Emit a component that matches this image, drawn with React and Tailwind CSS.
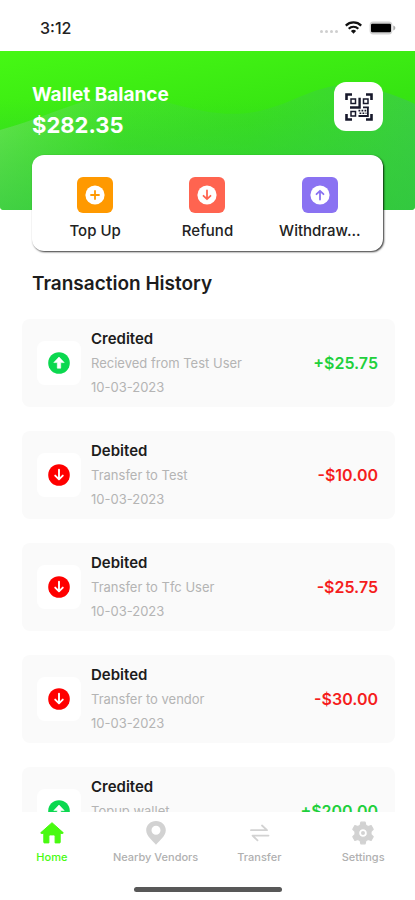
import React from 'react';
import clsx from 'clsx';

const actions = [
  { label: 'Top Up', icon: 'plus', bg: 'bg-[#ff9900]', fg: 'text-[#ff9900]' },
  { label: 'Refund', icon: 'down', bg: 'bg-[#ff6450]', fg: 'text-[#ff6450]' },
  { label: 'Withdraw...', icon: 'up', bg: 'bg-[#8a72f2]', fg: 'text-[#8a72f2]' },
];

const transactions = [
  { id: 1, type: 'credit', note: 'Recieved from Test User', date: '10-03-2023', amount: '+$25.75' },
  { id: 2, type: 'debit', note: 'Transfer to Test', date: '10-03-2023', amount: '-$10.00' },
  { id: 3, type: 'debit', note: 'Transfer to Tfc User', date: '10-03-2023', amount: '-$25.75' },
  { id: 4, type: 'debit', note: 'Transfer to vendor', date: '10-03-2023', amount: '-$30.00' },
  { id: 5, type: 'credit', note: 'Topup wallet', date: '10-03-2023', amount: '+$200.00' },
];

const tabs = [
  { label: 'Home', Icon: HomeIcon, active: true },
  { label: 'Nearby Vendors', Icon: PinIcon },
  { label: 'Transfer', Icon: TransferIcon },
  { label: 'Settings', Icon: GearIcon },
];

const glyphs = {
  plus: 'M10 6v8M6 10h8',
  down: 'M10 5.5v8.5M6.5 10.8 10 14.2l3.5-3.4',
  up: 'M10 14.5V6M6.5 9.2 10 5.8l3.5 3.4',
};

// White disc with the glyph in the current colour
function DiscIcon({ name, className }) {
  return (
    <svg viewBox="0 0 20 20" className={className} fill="none" aria-hidden="true">
      <circle cx="10" cy="10" r="9.6" fill="white" />
      <path d={glyphs[name]} stroke="currentColor" strokeWidth="1.8" strokeLinecap="round" strokeLinejoin="round" />
    </svg>
  );
}

function CreditIcon() {
  return (
    <svg viewBox="0 0 22 22" className="size-[22px]" aria-hidden="true">
      <circle cx="11" cy="11" r="10.8" fill="#0bd84f" />
      <path d="M11 5 16.2 10.6H12.7V16.2H9.3V10.6H5.8Z" fill="white" stroke="white" strokeWidth="0.6" strokeLinejoin="round" />
    </svg>
  );
}

function DebitIcon() {
  return (
    <svg viewBox="0 0 22 22" className="size-[22px]" fill="none" aria-hidden="true">
      <circle cx="11" cy="11" r="10.8" fill="#ff0000" />
      <path d="M11 5.8v9.4M7.2 11.6 11 15.4l3.8-3.8" stroke="white" strokeWidth="1.9" strokeLinecap="round" strokeLinejoin="round" />
    </svg>
  );
}

function HomeIcon() {
  return (
    <svg viewBox="0 0 24 24" className="size-6" fill="currentColor" stroke="currentColor" strokeWidth="1" strokeLinejoin="round" aria-hidden="true">
      <path d="M12 1.7.9 11.6c-.3.3-.1.8.3.8h2.600v9c0 .3.2.5.5.5h4.600v-6.700c0-.8.5-1.300 1.300-1.300h3.600c.8 0 1.300.5 1.300 1.300v6.700h4.600c.3 0 .5-.2.5-.5v-9h2.600c.4 0 .6-.5.3-.8Z" />
    </svg>
  );
}

function PinIcon() {
  return (
    <svg viewBox="0 0 24 24" className="size-6" aria-hidden="true">
      <path
        fillRule="evenodd"
        fill="currentColor"
        d="M12 0C6.4 0 2.2 4.2 2.2 9.2 2.2 15.4 9 19.700 12 23.800c3-4.100 9.800-8.400 9.800-14.600C21.800 4.2 17.600 0 12 0Zm0 4.800a4.500 4.500 0 1 1 0 9A4.500 4.500 0 0 1 12 4.800Z"
      />
    </svg>
  );
}

function TransferIcon() {
  return (
    <svg viewBox="0 0 24 24" className="size-6" fill="none" stroke="currentColor" strokeWidth="1.8" strokeLinecap="round" strokeLinejoin="round" aria-hidden="true">
      <path d="M4 9.200H20L15 4.500M21.500 14.600H5.500l5 4.700" />
    </svg>
  );
}

function GearIcon() {
  return (
    <svg viewBox="0 0 24 24" className="size-6" aria-hidden="true">
      <path
        fillRule="evenodd"
        fill="currentColor"
        stroke="currentColor"
        strokeWidth="1.2"
        strokeLinejoin="round"
        d="M9.900 1.200h4.200l.7 3 2.300 1.300 3-.9 2.100 3.700L20 10.500v3l2.200 2.200-2.100 3.700-3-.9-2.300 1.300-.7 3H9.900l-.7-3-2.300-1.300-3 .9-2.100-3.700L4 13.500v-3L1.800 8.300l2.100-3.700 3 .9 2.300-1.300ZM12 7.600a4.400 4.400 0 1 0 0 8.800 4.400 4.400 0 0 0 0-8.800Z"
      />
      <circle cx="12" cy="12" r="2" fill="currentColor" />
    </svg>
  );
}

function QrIcon() {
  return (
    <svg viewBox="0 0 28 28" className="size-7" fill="none" stroke="#17182b" aria-hidden="true">
      <path strokeWidth="2.6" d="M1.500 7V1.500H7M21 1.500h5.500V7M26.500 21v5.500H21M7 26.500H1.500V21" />
      <path strokeWidth="1.5" d="M6 6h4.500v4.500H6ZM18.500 6H23v4.500h-4.500ZM6 18.500h4.500V23H6Z" />
      <path strokeWidth="2.4" d="M14.600 4.800v9.700H5" />
      <path strokeWidth="1.8" d="M18 14.300h5.900M22.900 14v9H13.500" />
      <path strokeWidth="1.6" strokeDasharray="1.8 1.2" d="M13.500 17.600h8M14.500 20.300h7" />
    </svg>
  );
}

function StatusBar() {
  return (
    <div className="flex h-[51px] shrink-0 items-center justify-between pt-1 pr-[19px] pl-10">
      <span className="text-base leading-5 font-medium text-[#222]">3:12</span>
      <div className="flex items-center gap-[7px]">
        <div className="flex gap-[2px] pt-2">
          {[0, 1, 2, 3].map((dot) => (
            <span key={dot} className="size-[3px] rounded-full bg-[#cfcfcf]" />
          ))}
        </div>
        <svg viewBox="0 0 17 13" className="h-[13px] w-[17px]" fill="none" stroke="#111" strokeWidth="2.2" aria-hidden="true">
          <path d="M.8 4.600a11 11 0 0 1 15.400 0M3.700 7.700a6.900 6.900 0 0 1 9.600 0" />
          <path d="M8.500 12.700 5.900 10a3.700 3.700 0 0 1 5.200 0Z" fill="#111" stroke="none" />
        </svg>
        <svg viewBox="0 0 27 14" className="h-[14px] w-[27px]" aria-hidden="true">
          <rect x=".6" y=".6" width="22.8" height="12.8" rx="3.6" fill="#d2d2d2" />
          <rect x="2" y="2.8" width="20" height="8.4" rx="1.2" fill="#000" />
          <path d="M24.300 4.600c1.300.4 2 1.300 2 2.400s-.7 2-2 2.400Z" fill="#aaa" />
        </svg>
      </div>
    </div>
  );
}

function BalanceHeader() {
  return (
    <header className="relative h-[159px] shrink-0 overflow-hidden rounded-b bg-linear-170 from-[#46f814] via-[#36e412] to-[#2fd628]">
      <svg viewBox="0 0 415 159" preserveAspectRatio="none" className="absolute inset-0 size-full" aria-hidden="true">
        <defs>
          <linearGradient id="hills" x1="0" y1="0" x2="1" y2="0">
            <stop offset="0" stopColor="#6fe45c" stopOpacity="0.75" />
            <stop offset="0.3" stopColor="#48dc3c" stopOpacity="0.45" />
            <stop offset="0.6" stopColor="#3cd636" stopOpacity="0.4" />
            <stop offset="1" stopColor="#3ccb48" stopOpacity="0.8" />
          </linearGradient>
          <linearGradient id="shade" x1="0" y1="0" x2="0" y2="1">
            <stop offset="0.3" stopColor="#2fc53e" stopOpacity="0" />
            <stop offset="1" stopColor="#2fc53e" stopOpacity="0.6" />
          </linearGradient>
        </defs>
        <path d="M0 79C35 69 60 58 85 50 150 30 190 72 255 61 290 54 305 39 340 34 370 34 395 44 415 53v106H0Z" fill="url(#hills)" />
        <path d="M0 0h415v159H0Z" fill="url(#shade)" />
      </svg>
      <div className="relative flex items-start justify-between px-8 pt-[31px]">
        <div className="font-bold text-white">
          <h1 className="text-[19px] leading-[26px]">Wallet Balance</h1>
          <p className="text-[22px] leading-[35px]">$282.35</p>
        </div>
        <button type="button" aria-label="Scan QR code" className="flex size-[49px] items-center justify-center rounded-xl bg-white">
          <QrIcon />
        </button>
      </div>
    </header>
  );
}

function ActionCard() {
  return (
    <section className="relative mx-8 -mt-[55px] grid h-24 shrink-0 grid-cols-3 rounded-xl bg-white px-[7px] shadow-[1px_1px_2px_rgba(0,0,0,0.8)]">
      {actions.map(({ label, icon, bg, fg }) => (
        <button key={label} type="button" className="flex flex-col items-center gap-2 pt-[22px]">
          <span className={clsx('flex size-9 items-center justify-center rounded-md', bg, fg)}>
            <DiscIcon name={icon} className="size-5" />
          </span>
          <span className="text-[15px] leading-5 font-medium text-[#222]">{label}</span>
        </button>
      ))}
    </section>
  );
}

function TransactionRow({ type, note, date, amount }) {
  const isCredit = type === 'credit';

  return (
    <li className="flex items-center rounded-lg bg-[#fafafa] py-2 pr-[17px] pl-[15px]">
      <div className="flex size-11 shrink-0 items-center justify-center rounded-lg bg-white">
        {isCredit ? <CreditIcon /> : <DebitIcon />}
      </div>
      <div className="ml-[10px] min-w-0 flex-1 text-[13px] leading-6 text-[#b4b4b4]">
        <h3 className="text-[15px] leading-6 font-semibold text-[#1c1c1c]">{isCredit ? 'Credited' : 'Debited'}</h3>
        <p>{note}</p>
        <p>{date}</p>
      </div>
      <span className={clsx('text-base font-semibold', isCredit ? 'text-[#1fd03c]' : 'text-[#f51d1d]')}>
        {amount}
      </span>
    </li>
  );
}

function TabBar() {
  return (
    <nav className="relative shrink-0 bg-white pt-[9px] pb-2">
      <div className="grid grid-cols-4">
        {tabs.map(({ label, Icon, active }) => (
          <a
            key={label}
            href="#"
            className={clsx('flex flex-col items-center gap-1', active ? 'text-[#48fa10]' : 'text-[#d2d2d2]')}
          >
            <Icon />
            <span className={clsx('text-[11px] leading-4 font-medium whitespace-nowrap', !active && 'text-[#b0b0b0]')}>
              {label}
            </span>
          </a>
        ))}
      </div>
      <div className="mx-auto mt-[22px] h-[5px] w-[148px] rounded-full bg-[#585858]" />
    </nav>
  );
}

function App() {
  return (
    <div className="flex h-screen flex-col bg-white font-['Inter',sans-serif]">
      <StatusBar />
      <main className="flex min-h-0 flex-1 flex-col overflow-y-auto [scrollbar-width:none]">
        <BalanceHeader />
        <ActionCard />
        <h2 className="mt-[21px] px-8 text-[19px] leading-6 font-semibold text-[#1c1c1c]">Transaction History</h2>
        <ul className="mt-[23px] flex flex-col gap-6 pr-5 pl-[22px]">
          {transactions.map((item) => (
            <TransactionRow key={item.id} {...item} />
          ))}
        </ul>
      </main>
      <TabBar />
    </div>
  );
}

export default App;
